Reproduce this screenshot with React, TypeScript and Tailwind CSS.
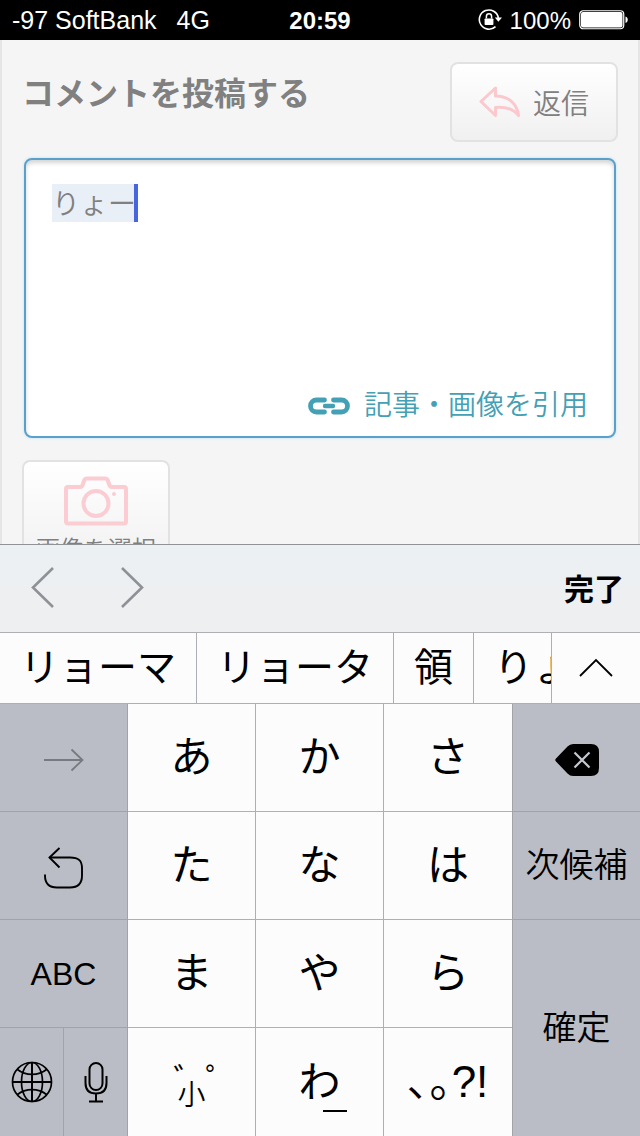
import { ReactNode, useState } from 'react'

const CANDIDATES = ['リョーマ', 'リョータ', '領']

// ステータスバー
const StatusBar = () => (
  <header className="grid h-10 flex-none grid-cols-3 items-center bg-black px-3 text-2xl text-white">
    <div className="flex gap-5 pt-0.5 text-[25px] whitespace-nowrap">
      <span>-97 SoftBank</span>
      <span>4G</span>
    </div>
    <div className="pt-0.5 text-center font-bold">20:59</div>
    <div className="flex items-center justify-end gap-2">
      <svg className="h-6 w-6 flex-none" viewBox="0 0 24 24" fill="none">
        <path d="M17.5 18.6A9.6 9.6 0 1 1 20.4 10" stroke="#fff" strokeWidth="1.6" />
        <path d="M16.8 9.6h7.2l-3.6 4.2z" fill="#fff" />
        <rect x="6.6" y="10.4" width="8.8" height="6.6" rx="0.8" fill="#fff" />
        <path d="M8.4 10.6V8.4a2.6 2.6 0 0 1 5.2 0v2.2" stroke="#fff" strokeWidth="1.5" />
      </svg>
      <span className="pt-0.5">100%</span>
      <svg className="h-5 w-[49px] flex-none" viewBox="0 0 49 20" fill="none">
        <rect x="0.75" y="0.75" width="44" height="18" rx="3.5" stroke="#fff" strokeWidth="1.2" />
        <rect x="2" y="2" width="41.5" height="15.5" rx="2" fill="#fff" />
        <path d="M46.5 6.5c3 .8 3 5.700 0 6.500z" fill="#fff" />
      </svg>
    </div>
  </header>
)

// コメント投稿フォーム
const CommentForm = () => {
  const [comment, setComment] = useState('りょー')

  return (
    <main className="min-h-0 flex-1 overflow-hidden border-x-2 border-[#e6e6e6] bg-[#f5f5f5] px-5 pt-[22px] text-[#808080]">
      <div className="flex items-start justify-between">
        <label htmlFor="comment" className="pt-4 text-[32px] leading-8 font-bold">
          コメントを投稿する
        </label>
        <button
          type="button"
          className="flex h-20 w-[168px] items-center justify-center gap-3 rounded-lg border-2 border-[#e2e2e2] bg-linear-to-b from-white to-[#f0f0f0] text-[28px] font-[350]"
        >
          <svg className="h-8 w-[42px]" viewBox="0 0 42 32" fill="none">
            <path
              d="M2 15.500 16.500 2v8C29 10 38 17 39.500 29.500 34 22.500 27 20.500 16.500 21.500v8z"
              stroke="#fbc8cd"
              strokeWidth="3"
              strokeLinejoin="round"
            />
          </svg>
          <span className="pt-1.5">返信</span>
        </button>
      </div>

      <div className="relative mx-0.5 mt-4 flex h-[280px] flex-col rounded-lg border-2 border-[#5b9fcb] bg-white shadow-[0_0_3px_#b9e0f5,inset_0_3px_4px_#d5d5d5]">
        <div className="absolute top-6 left-[26px] h-[38px] w-[86px] border-r-4 border-[#4566dc] bg-[#e9eff7]" />
        <textarea
          id="comment"
          className="relative w-full flex-1 resize-none bg-transparent px-[26px] pt-[26px] text-[28px] leading-[38px] font-[350] outline-none"
          value={comment}
          onChange={(e) => setComment(e.target.value)}
        />
        <a
          href="#quote"
          className="flex items-center justify-end gap-3.5 px-[26px] pb-2.5 text-[28px] leading-10 font-[350] text-[#44a0b5]"
        >
          <svg className="h-[18px] w-[42px]" viewBox="0 0 42 18" fill="none" stroke="#44a0b5" strokeLinecap="round">
            <path d="M16.500 3H8.500a6 6 0 0 0 0 12h8M25.500 3h8a6 6 0 0 1 0 12h-8" strokeWidth="4.800" />
            <path d="M17 9h8" strokeWidth="4.400" />
          </svg>
          記事・画像を引用
        </a>
      </div>

      <button
        type="button"
        className="mt-[22px] flex h-32 w-[148px] flex-col items-center rounded-lg border-2 border-[#e2e2e2] bg-linear-to-b from-white to-[#eeeeee] pt-3.5 text-2xl font-[350]"
      >
        <svg className="h-[50px] w-16" viewBox="0 0 64 50" fill="none" stroke="#fbcdd3" strokeWidth="4">
          <path
            d="M4 11h12c2 0 2.500-1 3-3l1-3c.5-2 1-2.500 3-2.500h18c2 0 2.500.5 3 2.500l1 3c.5 2 1 3 3 3h12c1.500 0 2 .5 2 2v32.500c0 1.500-.5 2-2 2H4c-1.500 0-2-.5-2-2V13c0-1.500.5-2 2-2z"
            strokeLinejoin="round"
          />
          <circle cx="32" cy="27.500" r="12.500" />
          <circle cx="50" cy="18" r="2" fill="#fbcdd3" stroke="none" />
        </svg>
        <span className="pt-2">画像を選択</span>
      </button>
    </main>
  )
}

// 入力補助バー
const AccessoryBar = () => (
  <div className="flex h-[88px] items-center border-t border-[#8f9296] bg-linear-to-b from-[#ebf0f3] to-[#efeff0] pr-4 pb-1 pl-[30px]">
    <button type="button" aria-label="前へ">
      <svg className="h-11 w-6" viewBox="0 0 24 44" fill="none" stroke="#8e9195" strokeWidth="2.600">
        <path d="M23 3 3 22.500 23 42" />
      </svg>
    </button>
    <button type="button" aria-label="次へ" className="ml-[66px]">
      <svg className="h-11 w-6" viewBox="0 0 24 44" fill="none" stroke="#8e9195" strokeWidth="2.600">
        <path d="M2 3 22 22.500 2 42" />
      </svg>
    </button>
    <button type="button" className="ml-auto pt-1.5 text-[30px] font-bold text-black">
      完了
    </button>
  </div>
)

// 変換候補
const CandidateBar = () => (
  <div className="flex h-[71px] border-t border-[#acafb3] bg-[#fcfcfc] text-[39px]">
    {CANDIDATES.map((word) => (
      <button key={word} type="button" className="flex-none border-r border-[#acafb3] px-5">
        {word}
      </button>
    ))}
    <button type="button" className="min-w-0 flex-1 overflow-hidden pl-5 text-left whitespace-nowrap">
      りょー
    </button>
    <button
      type="button"
      aria-label="候補を表示"
      className="flex w-[89px] flex-none items-center justify-center border-l border-[#acafb3]"
    >
      <svg className="h-5 w-[34px]" viewBox="0 0 34 20" fill="none" stroke="#000" strokeWidth="1.800">
        <path d="M1 18 17 2l16 16" />
      </svg>
    </button>
  </div>
)

type KeyProps = {
  children: ReactNode
  label?: string
  className?: string
}

const KanaKey = ({ children, label, className = 'border-r border-b' }: KeyProps) => (
  <button
    type="button"
    aria-label={label}
    className={`flex items-center justify-center border-[#acafb3] bg-[#fcfcfc] text-[42px] ${className}`}
  >
    {children}
  </button>
)

const FunctionKey = ({ children, label, className = 'border-r border-b' }: KeyProps) => (
  <button
    type="button"
    aria-label={label}
    className={`flex items-center justify-center border-[#a0a4a9] bg-[#babdc5] font-[350] whitespace-nowrap ${className}`}
  >
    {children}
  </button>
)

// かなキーボード
const Keyboard = () => (
  <div className="grid auto-rows-[108px] grid-cols-5 border-t border-[#acafb3]">
    <FunctionKey label="次の文字">
      <svg className="mt-1 h-6 w-10" viewBox="0 0 40 24" fill="none" stroke="#777a80" strokeWidth="1.800">
        <path d="M0 12h38M27.500 1.500 38.500 12 27.500 22.500" />
      </svg>
    </FunctionKey>
    <KanaKey>あ</KanaKey>
    <KanaKey>か</KanaKey>
    <KanaKey className="border-b">さ</KanaKey>
    <FunctionKey label="削除" className="border-b border-l">
      <svg className="mt-1 h-8 w-11" viewBox="0 0 44 32" fill="none">
        <path d="M1 14.500 12.500 2.500Q15 0 18 0h18q8 0 8 8v16q0 8-8 8H18q-3 0-5.500-2.500L1 17.500q-1.500-1.500 0-3z" fill="#000" />
        <path d="m19.500 8.500 15 15m0-15-15 15" stroke="#c5c8cf" strokeWidth="2.200" />
      </svg>
    </FunctionKey>

    <FunctionKey label="戻す">
      <svg className="mt-1 h-[42px] w-10" viewBox="0 0 40 42" fill="none" stroke="#000" strokeWidth="1.900">
        <path d="M15.500 1 5.500 10.500l10 10" />
        <path d="M5.500 10.500H26c9 0 12 3.500 12 11v7c0 8-4 12-12 12H13c-8 0-12-4-12-12v-1" />
      </svg>
    </FunctionKey>
    <KanaKey>た</KanaKey>
    <KanaKey>な</KanaKey>
    <KanaKey className="border-b">は</KanaKey>
    <FunctionKey className="border-b border-l text-[34px]">次候補</FunctionKey>

    <FunctionKey className="border-r border-b text-[32px]">ABC</FunctionKey>
    <KanaKey>ま</KanaKey>
    <KanaKey>や</KanaKey>
    <KanaKey className="border-b">ら</KanaKey>
    <FunctionKey className="row-span-2 border-l text-[34px]">確定</FunctionKey>

    <div className="grid grid-cols-2">
      <FunctionKey label="キーボード切り替え" className="border-r">
        <svg className="h-[42px] w-[42px]" viewBox="0 0 42 42" fill="none" stroke="#000" strokeWidth="1.700">
          <circle cx="21" cy="21" r="19.500" />
          <ellipse cx="21" cy="21" rx="10.500" ry="19.500" />
          <path d="M21 1.500v39M1.500 21h39" strokeWidth="2" />
          <path d="M6.500 8.500c8 6.500 21 6.500 29 0M6.500 33.500c8-6.500 21-6.500 29 0" />
        </svg>
      </FunctionKey>
      <FunctionKey label="音声入力" className="border-r">
        <svg className="h-[42px] w-6" viewBox="0 0 24 42" fill="none" stroke="#000" strokeWidth="2">
          <rect x="5.500" y="2" width="13" height="27" rx="6.500" />
          <path d="M1.500 15v7c0 7 4 10.500 10.500 10.500S22.500 29 22.500 22v-7M12 32.500v8M5 40.500h14" />
        </svg>
      </FunctionKey>
    </div>
    <KanaKey className="flex-col border-r pt-4">
      <span className="pl-7 text-[32px] leading-6">゛゜</span>
      <span className="-mt-3 text-[28px] leading-8 font-[350]">小</span>
    </KanaKey>
    <KanaKey className="relative border-r">
      わ
      <span className="absolute bottom-6 left-[67px] h-0.5 w-6 bg-black" />
    </KanaKey>
    <KanaKey className="text-[44px] font-[350]">､｡?!</KanaKey>
  </div>
)

const App = () => (
  <div
    lang="ja"
    className="flex h-screen flex-col overflow-hidden bg-[#f5f5f5] font-['Liberation_Sans','Noto_Sans_CJK_JP',sans-serif] text-black"
  >
    <StatusBar />
    <CommentForm />
    <section className="flex-none">
      <AccessoryBar />
      <CandidateBar />
      <Keyboard />
    </section>
  </div>
)

export default App
